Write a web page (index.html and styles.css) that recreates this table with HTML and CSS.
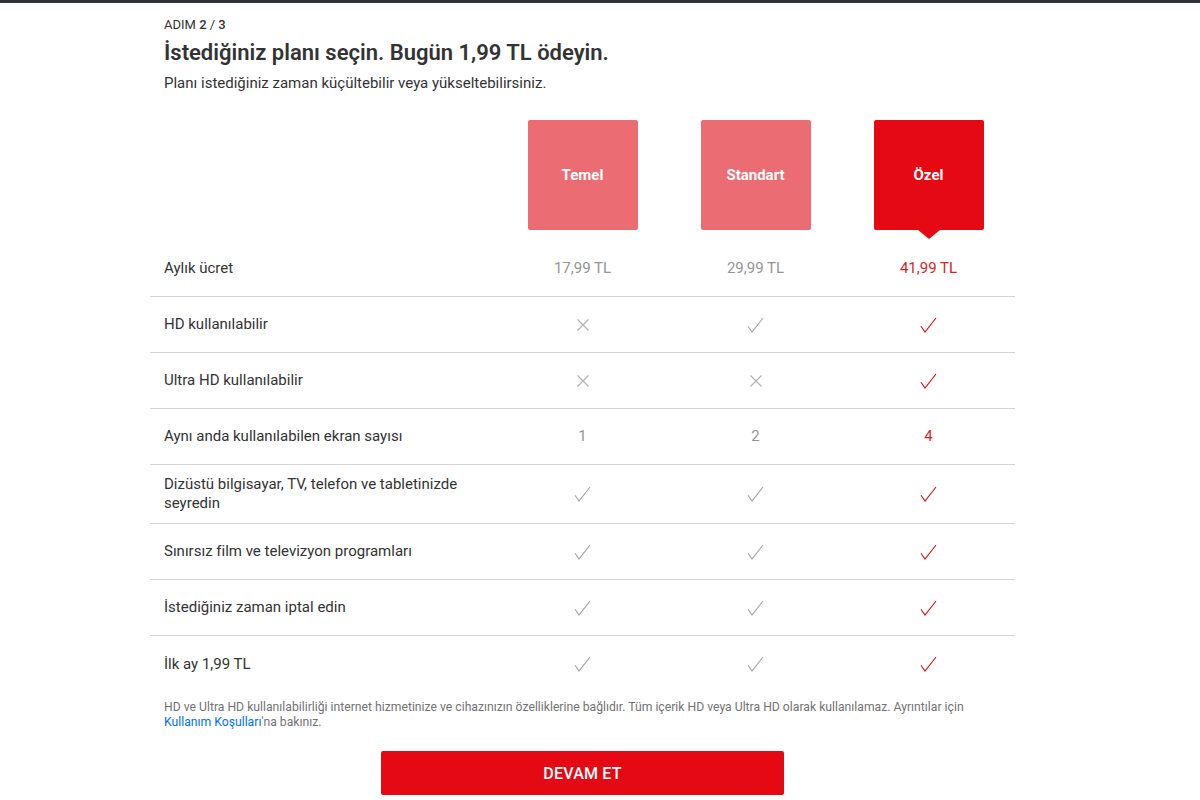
FILE: index.html
```html
<!DOCTYPE html>
<html lang="tr">
<head>
<meta charset="utf-8">
<title>Plan seçin</title>
<link rel="stylesheet" href="styles.css">
</head>
<body>
<div class="topbar"></div>
<main class="page">
  <header class="intro">
    <div class="step">ADIM <b>2</b> / <b>3</b></div>
    <h1 class="title">İstediğiniz planı seçin. Bugün 1,99 TL ödeyin.</h1>
    <p class="subtitle">Planı istediğiniz zaman küçültebilir veya yükseltebilirsiniz.</p>
  </header>

  <div class="plans">
    <div class="spacer"></div>
    <div class="plan-cell"><div class="plan">Temel</div></div>
    <div class="plan-cell"><div class="plan">Standart</div></div>
    <div class="plan-cell"><div class="plan selected">Özel</div></div>
  </div>

  <div class="table">
    <div class="row">
      <div class="label">Aylık ücret</div>
      <div class="val">17,99 TL</div>
      <div class="val">29,99 TL</div>
      <div class="val sel">41,99 TL</div>
    </div>
    <div class="row">
      <div class="label">HD kullanılabilir</div>
      <div class="val"><svg class="x" viewBox="0 0 12 12"><path d="M0.5 0.5L11.5 11.5M11.5 0.5L0.5 11.5"/></svg></div>
      <div class="val"><svg class="ck" viewBox="0 0 17 16"><path d="M1 9.2L5 15L16 1"/></svg></div>
      <div class="val sel"><svg class="ck" viewBox="0 0 17 16"><path d="M1 9.2L5 15L16 1"/></svg></div>
    </div>
    <div class="row">
      <div class="label">Ultra HD kullanılabilir</div>
      <div class="val"><svg class="x" viewBox="0 0 12 12"><path d="M0.5 0.5L11.5 11.5M11.5 0.5L0.5 11.5"/></svg></div>
      <div class="val"><svg class="x" viewBox="0 0 12 12"><path d="M0.5 0.5L11.5 11.5M11.5 0.5L0.5 11.5"/></svg></div>
      <div class="val sel"><svg class="ck" viewBox="0 0 17 16"><path d="M1 9.2L5 15L16 1"/></svg></div>
    </div>
    <div class="row">
      <div class="label">Aynı anda kullanılabilen ekran sayısı</div>
      <div class="val">1</div>
      <div class="val">2</div>
      <div class="val sel">4</div>
    </div>
    <div class="row">
      <div class="label">Dizüstü bilgisayar, TV, telefon ve tabletinizde seyredin</div>
      <div class="val"><svg class="ck" viewBox="0 0 17 16"><path d="M1 9.2L5 15L16 1"/></svg></div>
      <div class="val"><svg class="ck" viewBox="0 0 17 16"><path d="M1 9.2L5 15L16 1"/></svg></div>
      <div class="val sel"><svg class="ck" viewBox="0 0 17 16"><path d="M1 9.2L5 15L16 1"/></svg></div>
    </div>
    <div class="row">
      <div class="label">Sınırsız film ve televizyon programları</div>
      <div class="val"><svg class="ck" viewBox="0 0 17 16"><path d="M1 9.2L5 15L16 1"/></svg></div>
      <div class="val"><svg class="ck" viewBox="0 0 17 16"><path d="M1 9.2L5 15L16 1"/></svg></div>
      <div class="val sel"><svg class="ck" viewBox="0 0 17 16"><path d="M1 9.2L5 15L16 1"/></svg></div>
    </div>
    <div class="row">
      <div class="label">İstediğiniz zaman iptal edin</div>
      <div class="val"><svg class="ck" viewBox="0 0 17 16"><path d="M1 9.2L5 15L16 1"/></svg></div>
      <div class="val"><svg class="ck" viewBox="0 0 17 16"><path d="M1 9.2L5 15L16 1"/></svg></div>
      <div class="val sel"><svg class="ck" viewBox="0 0 17 16"><path d="M1 9.2L5 15L16 1"/></svg></div>
    </div>
    <div class="row last">
      <div class="label">İlk ay 1,99 TL</div>
      <div class="val"><svg class="ck" viewBox="0 0 17 16"><path d="M1 9.2L5 15L16 1"/></svg></div>
      <div class="val"><svg class="ck" viewBox="0 0 17 16"><path d="M1 9.2L5 15L16 1"/></svg></div>
      <div class="val sel"><svg class="ck" viewBox="0 0 17 16"><path d="M1 9.2L5 15L16 1"/></svg></div>
    </div>
  </div>

  <p class="note">HD ve Ultra HD kullanılabilirliği internet hizmetinize ve cihazınızın özelliklerine bağlıdır. Tüm içerik HD veya Ultra HD olarak kullanılamaz. Ayrıntılar için <a class="link" href="#">Kullanım Koşulları</a>'na bakınız.</p>

  <div class="actions">
    <button class="btn" type="button">DEVAM ET</button>
  </div>
</main>
</body>
</html>
```

FILE: styles.css
```css
* { box-sizing: border-box; }
html, body { margin: 0; padding: 0; background: #fff; }
body {
  font-family: Roboto, "Liberation Sans", Arial, sans-serif;
  color: #333;
}
.topbar { height: 3px; background: #2f3338; }

.page {
  width: 865px;
  margin-left: 150px;
}

.intro { padding: 14px 14px 0; }
.step {
  font-size: 13px;
  line-height: 16px;
  color: #333;
}
.step b { font-weight: 500; }
.title {
  margin: 6px 0 0;
  font-size: 22px;
  line-height: 28px;
  font-weight: 600;
  color: #333;
}
.subtitle {
  margin: 6px 0 0;
  font-size: 15px;
  line-height: 20px;
  color: #333;
}

.plans {
  display: grid;
  grid-template-columns: 346px repeat(3, 173px);
  margin-top: 27px;
  height: 121px;
}
.plan-cell { display: flex; justify-content: center; }
.plan {
  position: relative;
  width: 110px;
  height: 110px;
  border-radius: 2px;
  background: #ec6c74;
  color: #fff;
  font-family: Roboto, "Liberation Sans", Arial, sans-serif;
  font-weight: 700;
  font-size: 15px;
  display: flex;
  align-items: center;
  justify-content: center;
}
.plan.selected { background: #e50914; }
.plan.selected::after {
  content: "";
  position: absolute;
  left: 50%;
  top: 100%;
  margin-left: -11px;
  border-left: 11px solid transparent;
  border-right: 11px solid transparent;
  border-top: 9px solid #e50914;
}

.row {
  display: grid;
  grid-template-columns: 346px repeat(3, 173px);
  align-items: center;
  min-height: 56px;
  border-bottom: 1px solid #d4d4d4;
  font-size: 15px;
  line-height: 19px;
}
.row.last { border-bottom: none; }
.label { padding: 10px 20px 10px 14px; color: #333; }
.val {
  display: flex;
  justify-content: center;
  align-items: center;
  color: #959595;
}
.val.sel { color: #d81f26; }

.ck { width: 17px; height: 16px; fill: none; stroke: #a3a3a3; stroke-width: 1.1; }
.val.sel .ck { stroke: #d20b16; }
.x { width: 12px; height: 12px; fill: none; stroke: #b0b0b0; stroke-width: 1.1; }

.note {
  margin: 8px 0 0;
  padding: 0 14px;
  font-size: 12.2px;
  line-height: 15px;
  color: #737373;
}
.link { color: #0071eb; text-decoration: none; }

.actions {
  display: flex;
  justify-content: center;
  margin-top: 21px;
}
.btn {
  width: 403px;
  height: 44px;
  border: none;
  border-radius: 2px;
  background: #e50914;
  color: #fff;
  font-family: Roboto, "Liberation Sans", Arial, sans-serif;
  font-size: 16px;
  font-weight: 500;
  letter-spacing: 0.2px;
}
```
